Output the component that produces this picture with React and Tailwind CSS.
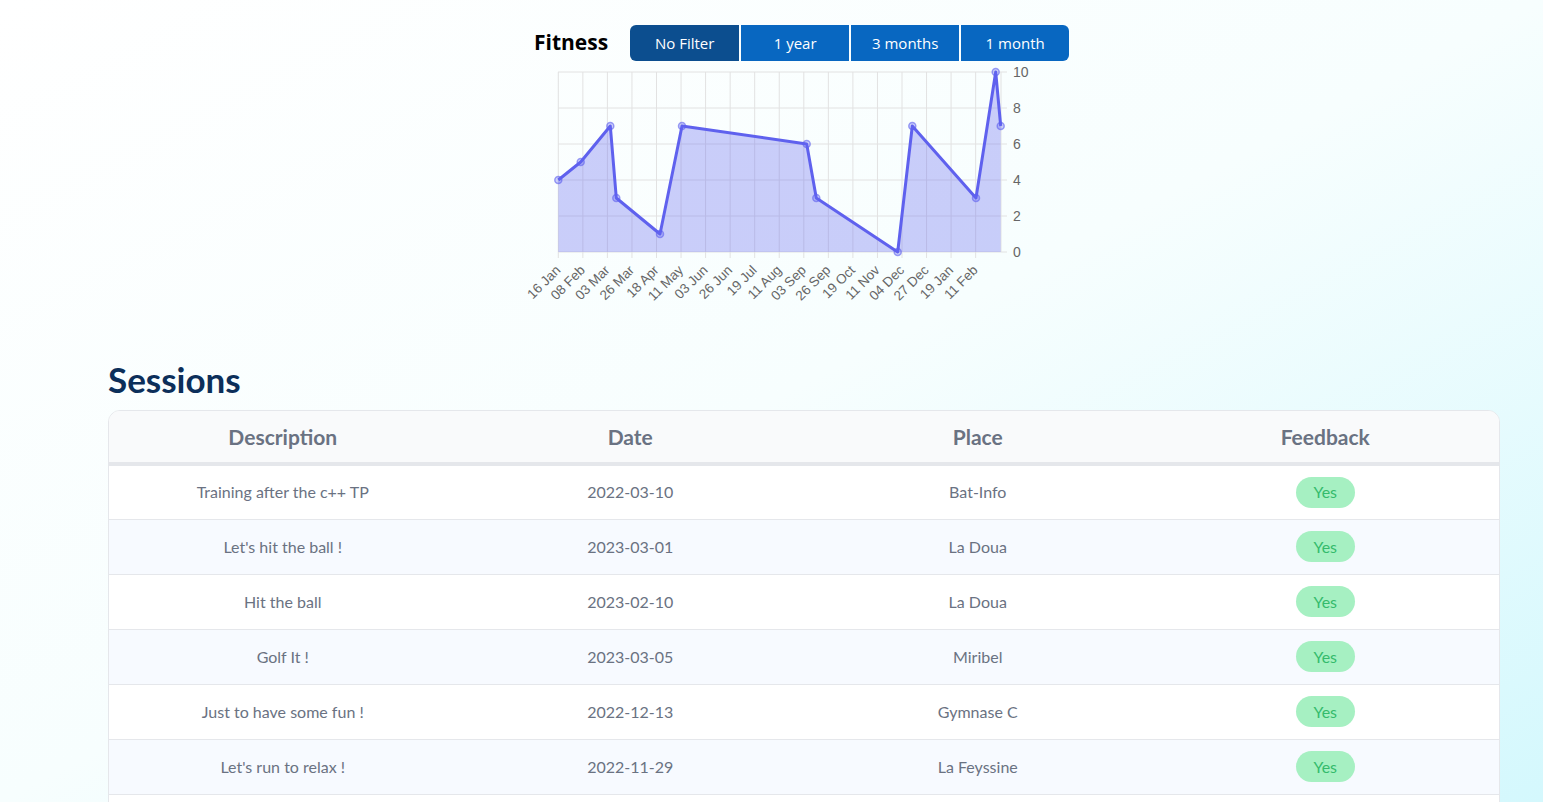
import React, { useState } from 'react';

const filters = ['No Filter', '1 year', '3 months', '1 month'];

const sessions = [
  { description: 'Training after the c++ TP', date: '2022-03-10', place: 'Bat-Info' },
  { description: "Let's hit the ball !", date: '2023-03-01', place: 'La Doua' },
  { description: 'Hit the ball', date: '2023-02-10', place: 'La Doua' },
  { description: 'Golf It !', date: '2023-03-05', place: 'Miribel' },
  { description: 'Just to have some fun !', date: '2022-12-13', place: 'Gymnase C' },
  { description: "Let's run to relax !", date: '2022-11-29', place: 'La Feyssine' },
  { description: 'Morning jog', date: '2022-10-02', place: 'Parc de la Tête d\'Or' },
];

// chart points, x in svg coords, value 0..10
const points = [
  [24.3, 4], [46.7, 5], [76.3, 7], [82.3, 3], [126, 1], [148, 7],
  [272.7, 6], [282.3, 3], [363.7, 0], [378.3, 7], [442, 3], [461.7, 10], [466.7, 7],
];

const xLabels = [
  '16 Jan', '08 Feb', '03 Mar', '26 Mar', '18 Apr', '11 May', '03 Jun', '26 Jun', '19 Jul',
  '11 Aug', '03 Sep', '26 Sep', '19 Oct', '11 Nov', '04 Dec', '27 Dec', '19 Jan', '11 Feb',
];

const PLOT_LEFT = 24;
const PLOT_RIGHT = 467;
const PLOT_TOP = 11;
const PLOT_BOTTOM = 191;
const yOf = (v) => PLOT_BOTTOM - v * 18;

const FitnessChart = () => {
  const line = points.map(([x, v]) => `${x},${yOf(v)}`).join(' ');
  const area = `${points[0][0]},${PLOT_BOTTOM} ${line} ${points[points.length - 1][0]},${PLOT_BOTTOM}`;

  return (
    <svg width="535" height="251" viewBox="0 0 535 251" className="overflow-visible">
      {/* grid */}
      {xLabels.map((_, i) => {
        const x = 24.3 + i * 24.55;
        return <line key={i} x1={x} y1={PLOT_TOP} x2={x} y2={PLOT_BOTTOM + 6} stroke="#e2e2e2" strokeWidth="1" />;
      })}
      <line x1={PLOT_RIGHT} y1={PLOT_TOP} x2={PLOT_RIGHT} y2={PLOT_BOTTOM} stroke="#e2e2e2" strokeWidth="1" />
      {[0, 2, 4, 6, 8, 10].map((v) => (
        <g key={v}>
          <line x1={PLOT_LEFT} y1={yOf(v)} x2={PLOT_RIGHT + 6} y2={yOf(v)} stroke="#e2e2e2" strokeWidth="1" />
          <text x={PLOT_RIGHT + 12} y={yOf(v) + 5} fill="#666" fontSize="14" fontFamily="'Liberation Sans', Arial, sans-serif">
            {v}
          </text>
        </g>
      ))}

      {/* data */}
      <polygon points={area} fill="rgba(99,102,241,0.32)" />
      <polyline points={line} fill="none" stroke="#5f61ee" strokeWidth="3" strokeLinejoin="round" />
      {points.map(([x, v], i) => (
        <circle key={i} cx={x} cy={yOf(v)} r="3.5" fill="rgba(99,102,241,0.3)" stroke="rgba(95,97,238,0.6)" strokeWidth="1.5" />
      ))}

      {/* x labels */}
      {xLabels.map((label, i) => {
        const x = 24.3 + i * 24.55;
        return (
          <text
            key={label + i}
            transform={`translate(${x + 3}, ${PLOT_BOTTOM + 19}) rotate(-45)`}
            textAnchor="end"
            fill="#666"
            fontSize="13.5"
            fontFamily="'Liberation Sans', Arial, sans-serif"
          >
            {label}
          </text>
        );
      })}
    </svg>
  );
};

const App = () => {
  const [activeFilter, setActiveFilter] = useState('No Filter');

  return (
    <div
      className="min-h-screen bg-fixed bg-linear-to-br from-white via-[#f7fefe] to-[#d4f8fd]"
      style={{ fontFamily: 'Lato, "Open Sans", sans-serif' }}
    >
      {/* Fitness chart */}
      <div className="flex flex-col items-center pl-[60px] pt-[25px]">
        <div className="flex items-center w-[535px]">
          <span className="text-[21px] font-bold text-black mr-[22px]" style={{ fontFamily: '"Open Sans", sans-serif' }}>
            Fitness
          </span>
          <div className="flex gap-[2px]">
            {filters.map((f, i) => (
              <button
                key={f}
                onClick={() => setActiveFilter(f)}
                className={`h-9 w-[108px] text-[15px] text-white ${
                  activeFilter === f ? 'bg-[#0c4e8f]' : 'bg-[#0867c1]'
                } ${i === 0 ? 'rounded-l-md w-[109px]' : ''} ${i === filters.length - 1 ? 'rounded-r-md' : ''}`}
                style={{ fontFamily: '"Open Sans", sans-serif' }}
              >
                {f}
              </button>
            ))}
          </div>
        </div>
        <FitnessChart />
      </div>

      {/* Sessions */}
      <div className="pl-[108px] pr-[43px] pb-10">
        <h2 className="text-[35px] font-bold text-[#0c2f5a] mt-[47px] mb-[10px] leading-[41px]">Sessions</h2>
        <div className="rounded-t-xl border border-gray-200 overflow-hidden bg-white">
          <table className="w-full table-fixed border-collapse">
            <thead>
              <tr className="bg-[#f9fafb]">
                {['Description', 'Date', 'Place', 'Feedback'].map((h) => (
                  <th key={h} className="h-[53px] border-b-4 border-gray-200 text-[21px] font-bold text-gray-500 text-center">
                    {h}
                  </th>
                ))}
              </tr>
            </thead>
            <tbody>
              {sessions.map((s, i) => (
                <tr key={i} className={i % 2 === 0 ? 'bg-white' : 'bg-[#f7faff]'}>
                  <td className="h-[55px] border-b border-gray-200 text-center text-[16px] text-gray-500">{s.description}</td>
                  <td className="h-[55px] border-b border-gray-200 text-center text-[16px] text-gray-500">{s.date}</td>
                  <td className="h-[55px] border-b border-gray-200 text-center text-[16px] text-gray-500">{s.place}</td>
                  <td className="h-[55px] border-b border-gray-200 text-center">
                    <span className="inline-flex items-center justify-center w-[59px] h-[31px] rounded-full bg-[#a6f0c2] text-[16px] text-[#34bb6c]">
                      Yes
                    </span>
                  </td>
                </tr>
              ))}
            </tbody>
          </table>
        </div>
      </div>
    </div>
  );
};

export default App;
